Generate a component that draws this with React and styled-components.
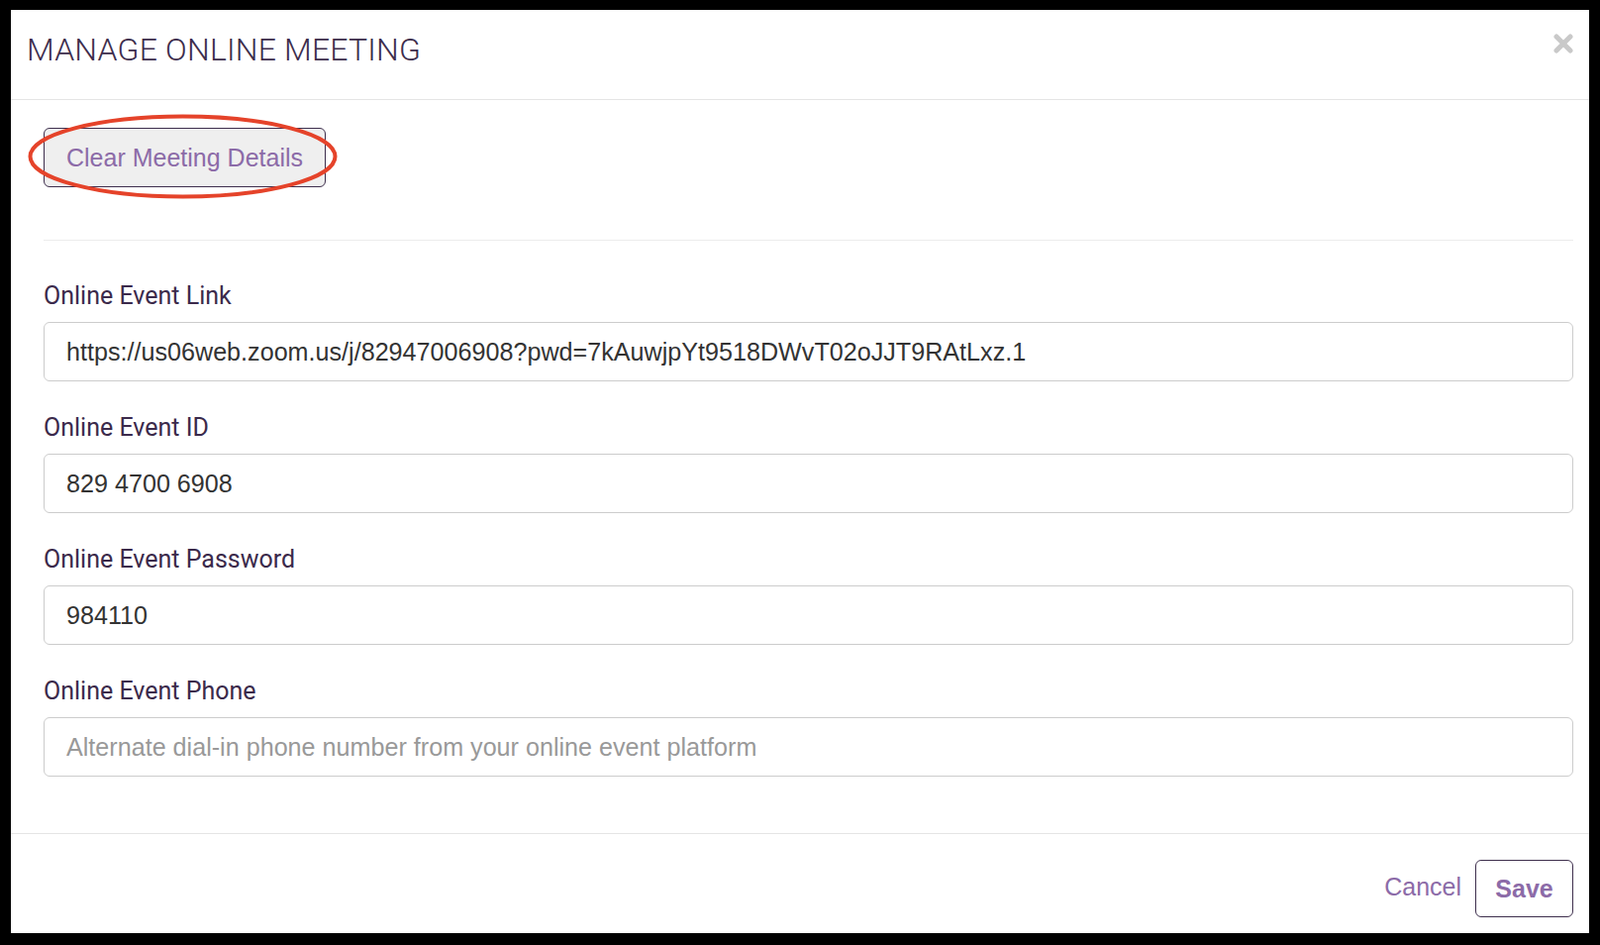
import React from 'react'
import styled, { createGlobalStyle } from 'styled-components'

const GlobalStyle = createGlobalStyle`
  * { box-sizing: border-box; }
  html, body {
    margin: 0;
    padding: 0;
    background: #000;
    font-family: "Liberation Sans", Arial, sans-serif;
  }
`

const fields = [
  { label: 'Online Event Link', value: 'https://us06web.zoom.us/j/82947006908?pwd=7kAuwjpYt9518DWvT02oJJT9RAtLxz.1' },
  { label: 'Online Event ID', value: '829 4700 6908' },
  { label: 'Online Event Password', value: '984110' },
  { label: 'Online Event Phone', placeholder: 'Alternate dial-in phone number from your online event platform' },
]

function App() {
  return (
    <>
      <GlobalStyle />
      <Modal>
        <Header>
          <Title>MANAGE ONLINE MEETING</Title>
          <Close aria-label="close">
            <svg width="20" height="20" viewBox="0 0 20 20">
              <path d="M3 3 L17 17 M17 3 L3 17" stroke="#c9c9c9" strokeWidth="5" strokeLinecap="round" />
            </svg>
          </Close>
        </Header>
        <Body>
          <ClearWrap>
            <ClearButton>Clear Meeting Details</ClearButton>
            <Highlight viewBox="0 0 313 86" preserveAspectRatio="none">
              <ellipse cx="156.5" cy="43" rx="154" ry="40.5" fill="none" stroke="#e5432a" strokeWidth="4" />
            </Highlight>
          </ClearWrap>
          <Divider />
          {fields.map(f => (
            <Group key={f.label}>
              <Label>{f.label}</Label>
              <Input defaultValue={f.value} placeholder={f.placeholder} />
            </Group>
          ))}
        </Body>
        <Footer>
          <CancelLink>Cancel</CancelLink>
          <SaveButton>Save</SaveButton>
        </Footer>
      </Modal>
    </>
  )
}

export default App

const Modal = styled.div`
    margin: 10px 11px 12px 11px;
    height: 932px;
    background: #fff;
    display: flex;
    flex-direction: column;
`

const Header = styled.div`
    height: 91px;
    padding: 22px 16px 0 16px;
    border-bottom: 1px solid #e5e5e5;
    display: flex;
    justify-content: space-between;
    align-items: flex-start;
`

const Title = styled.h1`
    margin: 0;
    font-family: Roboto, "Liberation Sans", sans-serif;
    font-weight: 300;
    font-size: 32px;
    line-height: 36px;
    color: #3d2d4c;
    letter-spacing: 0.2px;
`

const Close = styled.button`
    margin-top: 2px;
    padding: 0;
    border: 0;
    background: none;
    width: 20px;
    height: 20px;
    cursor: pointer;
`

const Body = styled.div`
    flex: 1;
    padding: 28px 16px 0 33px;
`

const ClearWrap = styled.div`
    position: relative;
    display: inline-block;
`

const ClearButton = styled.button`
    height: 60px;
    padding: 0 22px;
    background: #efefef;
    border: 1px solid #3e2f4d;
    border-radius: 6px;
    font-family: "Liberation Sans", Arial, sans-serif;
    font-size: 25px;
    color: #8c6ba8;
    cursor: pointer;
`

// red annotation ring drawn over the button
const Highlight = styled.svg`
    position: absolute;
    left: -16px;
    top: -14px;
    width: 313px;
    height: 86px;
    pointer-events: none;
    overflow: visible;
`

const Divider = styled.div`
    height: 1px;
    background: #ececec;
    margin: 53px 0 38px 0;
`

const Group = styled.div`
    margin-bottom: 29px;
`

const Label = styled.label`
    display: block;
    font-family: Roboto, "Liberation Sans", sans-serif;
    font-size: 25px;
    line-height: 30px;
    padding-top: 3px;
    color: #3b2a4b;
    margin-bottom: 11px;
`

const Input = styled.input`
    display: block;
    width: 100%;
    height: 60px;
    padding: 0 22px;
    border: 1px solid #cccccc;
    border-radius: 6px;
    font-family: "Liberation Sans", Arial, sans-serif;
    font-size: 25.15px;
    color: #333;
    outline: none;
    &::placeholder {
        color: #999;
    }
`

const Footer = styled.div`
    border-top: 1px solid #e5e5e5;
    padding: 26px 16px 16px 16px;
    display: flex;
    justify-content: flex-end;
    align-items: center;
    gap: 14px;
`

const CancelLink = styled.a`
    font-size: 25px;
    color: #8c6ba8;
    margin-top: -3px;
    cursor: pointer;
`

const SaveButton = styled.button`
    width: 99px;
    height: 58px;
    background: #fff;
    border: 1px solid #3e2f4d;
    border-radius: 6px;
    font-family: "Liberation Sans", Arial, sans-serif;
    font-size: 25px;
    font-weight: bold;
    color: #8c6ba8;
    cursor: pointer;
`
